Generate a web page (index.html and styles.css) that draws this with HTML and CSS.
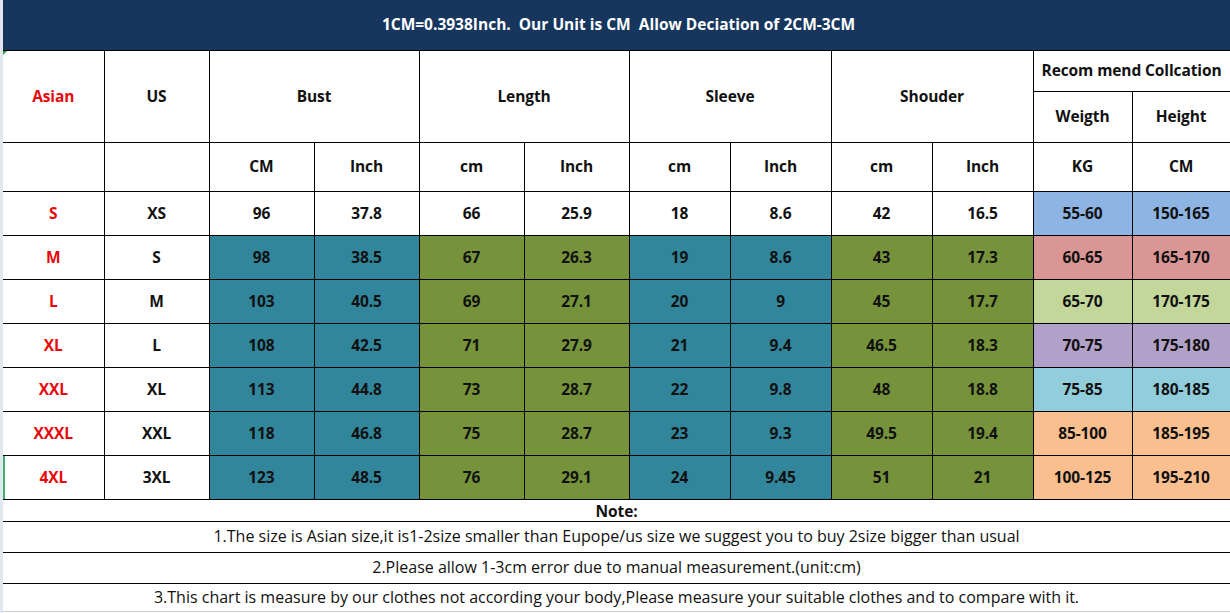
FILE: index.html
```html
<!DOCTYPE html>
<html lang="en">
<head>
<meta charset="utf-8">
<title>Size Chart</title>
<link rel="stylesheet" href="styles.css">
</head>
<body>
<div class="sheet">
  <div class="banner">1CM=0.3938Inch.  Our Unit is CM  Allow Deciation of 2CM-3CM</div>
  <table class="chart">
    <colgroup>
      <col class="w101"><col class="w105"><col class="w105"><col class="w105"><col class="w105"><col class="w105">
      <col class="w101"><col class="w101"><col class="w101"><col class="w101"><col class="w99"><col class="w98">
    </colgroup>
    <tr class="r1">
      <td rowspan="2" class="red corner">Asian</td>
      <td rowspan="2">US</td>
      <td rowspan="2" colspan="2">Bust</td>
      <td rowspan="2" colspan="2">Length</td>
      <td rowspan="2" colspan="2">Sleeve</td>
      <td rowspan="2" colspan="2">Shouder</td>
      <td colspan="2">Recom mend Collcation</td>
    </tr>
    <tr class="r2">
      <td>Weigth</td><td>Height</td>
    </tr>
    <tr class="r3">
      <td></td><td></td><td>CM</td><td>Inch</td><td>cm</td><td>Inch</td><td>cm</td><td>Inch</td><td>cm</td><td>Inch</td><td>KG</td><td>CM</td>
    </tr>
    <tr class="row plain">
      <td class="red">S</td><td>XS</td><td>96</td><td>37.8</td><td>66</td><td>25.9</td><td>18</td><td>8.6</td><td>42</td><td>16.5</td><td class="c1">55-60</td><td class="c1">150-165</td>
    </tr>
    <tr class="row">
      <td class="red">M</td><td>S</td><td class="teal">98</td><td class="teal">38.5</td><td class="olive">67</td><td class="olive">26.3</td><td class="teal">19</td><td class="teal">8.6</td><td class="olive">43</td><td class="olive">17.3</td><td class="c2">60-65</td><td class="c2">165-170</td>
    </tr>
    <tr class="row">
      <td class="red">L</td><td>M</td><td class="teal">103</td><td class="teal">40.5</td><td class="olive">69</td><td class="olive">27.1</td><td class="teal">20</td><td class="teal">9</td><td class="olive">45</td><td class="olive">17.7</td><td class="c3">65-70</td><td class="c3">170-175</td>
    </tr>
    <tr class="row">
      <td class="red">XL</td><td>L</td><td class="teal">108</td><td class="teal">42.5</td><td class="olive">71</td><td class="olive">27.9</td><td class="teal">21</td><td class="teal">9.4</td><td class="olive">46.5</td><td class="olive">18.3</td><td class="c4">70-75</td><td class="c4">175-180</td>
    </tr>
    <tr class="row">
      <td class="red">XXL</td><td>XL</td><td class="teal">113</td><td class="teal">44.8</td><td class="olive">73</td><td class="olive">28.7</td><td class="teal">22</td><td class="teal">9.8</td><td class="olive">48</td><td class="olive">18.8</td><td class="c5">75-85</td><td class="c5">180-185</td>
    </tr>
    <tr class="row">
      <td class="red">XXXL</td><td>XXL</td><td class="teal">118</td><td class="teal">46.8</td><td class="olive">75</td><td class="olive">28.7</td><td class="teal">23</td><td class="teal">9.3</td><td class="olive">49.5</td><td class="olive">19.4</td><td class="c6">85-100</td><td class="c6">185-195</td>
    </tr>
    <tr class="row">
      <td class="red sel">4XL</td><td>3XL</td><td class="teal">123</td><td class="teal">48.5</td><td class="olive">76</td><td class="olive">29.1</td><td class="teal">24</td><td class="teal">9.45</td><td class="olive">51</td><td class="olive">21</td><td class="c6">100-125</td><td class="c6">195-210</td>
    </tr>
    <tr class="note-title">
      <td colspan="12">Note:</td>
    </tr>
    <tr class="note">
      <td colspan="12">1.The size is Asian size,it is1-2size smaller than Eupope/us size we suggest you to buy 2size bigger than usual</td>
    </tr>
    <tr class="note">
      <td colspan="12">2.Please allow 1-3cm error due to manual measurement.(unit:cm)</td>
    </tr>
    <tr class="note last">
      <td colspan="12">3.This chart is measure by our clothes not according your body,Please measure your suitable clothes and to compare with it.</td>
    </tr>
  </table>
</div>
</body>
</html>
```
FILE: styles.css
```css
html, body {
  margin: 0;
  padding: 0;
  background: #e6e9f1;
}
.sheet {
  width: 1230px;
  height: 613px;
  box-sizing: border-box;
  border-left: 3px solid #e2e6f0;
  background: #ffffff;
  overflow: hidden;
  font-family: "Open Sans", "Noto Sans", sans-serif;
  color: #111;
}
.banner {
  height: 50px;
  background: #17365d;
  color: #ffffff;
  font-weight: 700;
  font-size: 15.5px;
  letter-spacing: 0;
  white-space: pre;
  display: flex;
  align-items: center;
  justify-content: center;
  padding-left: 4px;
  padding-bottom: 2px;
  box-sizing: border-box;
}
.chart {
  width: 1227px;
  table-layout: fixed;
  border-collapse: collapse;
}
.w101 { width: 101px; }
.w105 { width: 105px; }
.w99 { width: 99px; }
.w98 { width: 98px; }
.chart td {
  border: 1px solid #000;
  padding: 0 0 2px 0;
  text-align: center;
  vertical-align: middle;
  font-weight: 700;
  font-size: 15.5px;
  letter-spacing: -0.1px;
  line-height: 18px;
  white-space: nowrap;
}
.chart tr > td:first-child {
  border-left: none;
}
.r1 { height: 41px; }
.r2 { height: 51px; }
.r3 { height: 49px; }
.row { height: 44px; }
.red { color: #e8080c; }
.corner {
  position: relative;
}
.corner::before {
  content: "";
  position: absolute;
  left: 0;
  top: 0;
  border-top: 4px solid #2e9a4a;
  border-right: 4px solid transparent;
}
.sel { box-shadow: inset 2px 0 0 #3fae6f; }
.teal { background: #31869b; }
.olive { background: #76933c; }
.c1 { background: #8db4e2; }
.c2 { background: #da9694; }
.c3 { background: #c4d79b; }
.c4 { background: #b1a0c7; }
.c5 { background: #92cddc; }
.c6 { background: #fabf8f; }
.note-title { height: 22px; }
.note-title td {
  border-left: none;
  border-right: none;
  font-size: 15.5px;
  line-height: 18px;
  padding-bottom: 0;
}
.note { height: 31px; }
.note td {
  border-left: none;
  border-right: none;
  font-weight: 400;
  font-size: 16px;
  letter-spacing: 0;
}
.note.last { height: 28px; }
.note.last td {
  border-bottom: 1px solid #c9cdd6;
}
```
